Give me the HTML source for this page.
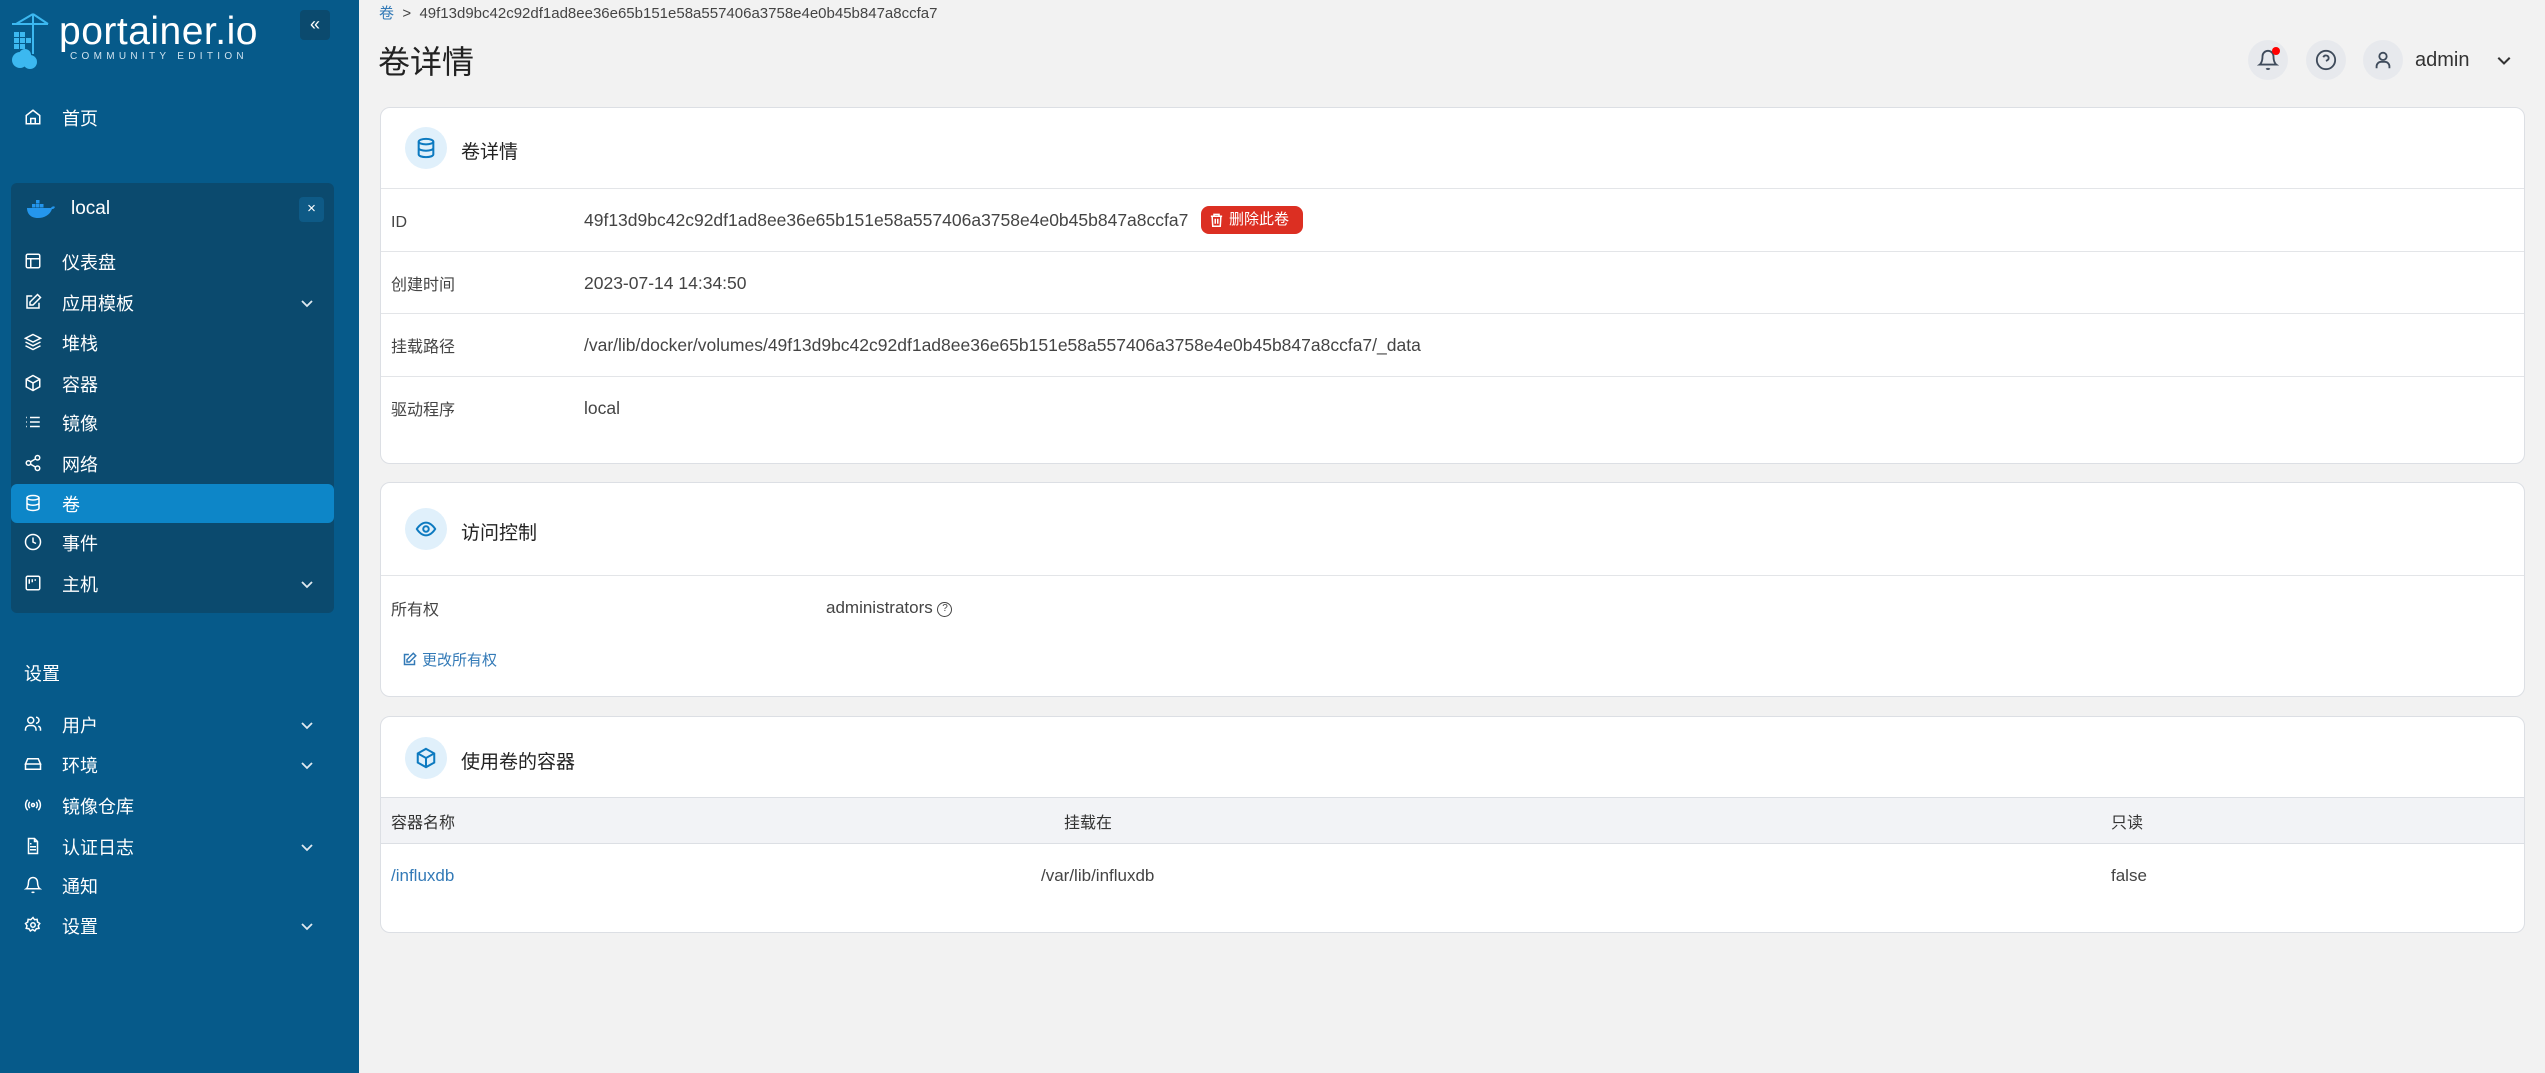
<!DOCTYPE html>
<html><head><meta charset="utf-8"><style>
*{box-sizing:border-box;margin:0;padding:0}
body{width:2545px;height:1073px;background:#f2f2f2;font-family:"Liberation Sans","Noto Sans CJK SC",sans-serif;position:relative;overflow:hidden;color:#333;line-height:20px}
.sb{position:absolute;left:0;top:0;width:359px;height:1073px;background:#065a8a;color:#fff}
.a{position:absolute}
.ni{position:absolute;left:24px;font-size:18px;color:#fff;display:flex;align-items:center;height:30px;line-height:30px}
.ni span{position:relative;top:2px}
.ni svg{width:18px;height:18px;margin-right:20px;stroke:#fff;fill:none;stroke-width:2}
.chev{position:absolute;left:300px;width:14px;height:14px}
.env{position:absolute;left:11px;top:183px;width:323px;height:430px;background:#0b4a6e;border-radius:6px}
.card{position:absolute;left:380px;width:2145px;background:#fff;border:1px solid #dcdfe4;border-radius:10px}
.ch{height:81px;border-bottom:1px solid #e3e5e8;display:flex;align-items:center;padding-left:24px;font-size:19px;color:#222;line-height:24px}
.ch b{font-weight:normal;position:relative;top:5px}
.ic{width:42px;height:42px;border-radius:50%;background:#e0f0fb;display:flex;align-items:center;justify-content:center;margin-right:14px}
.ic svg{width:22px;height:22px;stroke:#0d7ac0;fill:none;stroke-width:2.2}
.row{height:62.5px;border-bottom:1px solid #e3e5e8;position:relative;font-size:17.5px;color:#444}
.row span{position:absolute;top:21px;line-height:20px;height:20px}
.row span.l{font-size:16px;top:24px}
.tb{position:absolute;font-size:17px;color:#444;line-height:20px}
.circ{position:absolute;width:40px;height:40px;border-radius:50%;background:#e7e9ed;display:flex;align-items:center;justify-content:center}
.circ svg{width:22px;height:22px;stroke:#3f4b5b;fill:none;stroke-width:2}
</style></head><body>
<div class="sb">
 <svg class="a" style="left:8px;top:10px" width="42" height="60" viewBox="0 0 42 60"><g stroke="#3cb8f0" stroke-width="2" fill="none"><line x1="25" y1="4" x2="25" y2="44"/><line x1="4" y1="14" x2="40" y2="14"/><line x1="25" y1="4" x2="8" y2="14"/><line x1="25" y1="4" x2="40" y2="14"/></g><g fill="#3cb8f0"><rect x="6" y="22" width="5" height="5"/><rect x="12" y="22" width="5" height="5"/><rect x="6" y="28" width="5" height="5"/><rect x="12" y="28" width="5" height="5"/><rect x="18" y="28" width="5" height="5"/><rect x="6" y="34" width="5" height="5"/><rect x="12" y="34" width="5" height="5"/><circle cx="12" cy="50" r="8"/><circle cx="22" cy="52" r="7"/><circle cx="17" cy="45" r="6"/></g></svg>
 <div class="a" style="left:59px;top:10px;font-size:39px;line-height:44px;color:#fff;letter-spacing:0.5px">portainer.io</div>
 <div class="a" style="left:70px;top:51px;font-size:10px;line-height:12px;color:#cfe3ef;letter-spacing:4.3px">COMMUNITY EDITION</div>
 <div class="a" style="left:300px;top:10px;width:30px;height:30px;background:#0b4a6e;border-radius:4px;color:#fff;font-size:18px;text-align:center;line-height:28px">«</div>
 <div class="ni" style="top:102px"><svg viewBox="0 0 24 24"><path d="M3 10l9-7 9 7v11H3z"/><path d="M9 21v-7h6v7"/></svg><span>首页</span></div>
 <div class="env"></div>
 <svg class="a" style="left:27px;top:200px" width="28" height="18" viewBox="0 0 28 18"><g fill="#2496ed"><rect x="5" y="4" width="3.5" height="3.5"/><rect x="9" y="4" width="3.5" height="3.5"/><rect x="13" y="4" width="3.5" height="3.5"/><rect x="9" y="0" width="3.5" height="3.5"/><path d="M0 8h24c1-2 3-2 4-1-1 2-2 2-3 2-2 6-8 9-14 9C3 18 0 13 0 8z"/></g></svg>
 <div class="a" style="left:71px;top:198px;font-size:19px;line-height:22px">local</div>
 <div class="a" style="left:299px;top:197px;width:25px;height:25px;background:#0e5a86;border-radius:4px;text-align:center;line-height:24px;font-size:15px">×</div>
 <div class="a" style="left:11px;top:484px;width:323px;height:39px;background:#0d86c8;border-radius:6px"></div>
 <div class="ni" style="top:246px"><svg viewBox="0 0 24 24"><rect x="3" y="3" width="18" height="18" rx="2"/><path d="M3 9h18M9 9v12"/></svg><span>仪表盘</span></div>
 <div class="ni" style="top:287px"><svg viewBox="0 0 24 24"><path d="M11 4H4v16h16v-7"/><path d="M18 2l4 4-10 10H8v-4z"/></svg><span>应用模板</span></div>
 <div class="ni" style="top:327px"><svg viewBox="0 0 24 24"><path d="M12 2l10 5-10 5-10-5z"/><path d="M2 12l10 5 10-5M2 17l10 5 10-5"/></svg><span>堆栈</span></div>
 <div class="ni" style="top:368px"><svg viewBox="0 0 24 24"><path d="M12 2l9 5v10l-9 5-9-5V7z"/><path d="M3 7l9 5 9-5M12 12v10"/></svg><span>容器</span></div>
 <div class="ni" style="top:407px"><svg viewBox="0 0 24 24"><path d="M8 6h13M8 12h13M8 18h13M3 6h1M3 12h1M3 18h1"/></svg><span>镜像</span></div>
 <div class="ni" style="top:448px"><svg viewBox="0 0 24 24"><circle cx="18" cy="5" r="3"/><circle cx="6" cy="12" r="3"/><circle cx="18" cy="19" r="3"/><path d="M8.6 13.5l6.8 4M15.4 6.5l-6.8 4"/></svg><span>网络</span></div>
 <div class="ni" style="top:488px"><svg viewBox="0 0 24 24"><ellipse cx="12" cy="5" rx="8" ry="3"/><path d="M4 5v14c0 1.7 3.6 3 8 3s8-1.3 8-3V5M4 12c0 1.7 3.6 3 8 3s8-1.3 8-3"/></svg><span>卷</span></div>
 <div class="ni" style="top:527px"><svg viewBox="0 0 24 24"><circle cx="12" cy="12" r="10"/><path d="M12 6v6l4 2"/></svg><span>事件</span></div>
 <div class="ni" style="top:568px"><svg viewBox="0 0 24 24"><rect x="3" y="3" width="18" height="18" rx="2"/><path d="M7 7v6M11 7v4M15 7v2"/></svg><span>主机</span></div>
 <div class="a" style="left:24px;top:661px;font-size:18px;line-height:26px">设置</div>
 <div class="ni" style="top:709px"><svg viewBox="0 0 24 24"><circle cx="9" cy="7" r="4"/><path d="M2 21v-2a5 5 0 015-5h4a5 5 0 015 5v2M16 3a4 4 0 010 8M22 21v-2a4 4 0 00-3-4"/></svg><span>用户</span></div>
 <div class="ni" style="top:749px"><svg viewBox="0 0 24 24"><path d="M2 12h20v7H2zM5 5h14l3 7H2z"/><path d="M6 16h.01M10 16h.01"/></svg><span>环境</span></div>
 <div class="ni" style="top:790px"><svg viewBox="0 0 24 24"><circle cx="12" cy="12" r="2"/><path d="M16.2 7.8a6 6 0 010 8.4M7.8 16.2a6 6 0 010-8.4M19 5a10 10 0 010 14M5 19A10 10 0 015 5"/></svg><span>镜像仓库</span></div>
 <div class="ni" style="top:831px"><svg viewBox="0 0 24 24"><path d="M14 2H6v20h12V6z"/><path d="M14 2v4h4M8 13h8M8 17h8M8 9h2"/></svg><span>认证日志</span></div>
 <div class="ni" style="top:870px"><svg viewBox="0 0 24 24"><path d="M18 8A6 6 0 006 8c0 7-3 9-3 9h18s-3-2-3-9M13.7 21a2 2 0 01-3.4 0"/></svg><span>通知</span></div>
 <div class="ni" style="top:910px"><svg viewBox="0 0 24 24"><circle cx="12" cy="12" r="3"/><path d="M12 2l2 3 3.5-.5.5 3.5 3 2-2 3 1 3.5-3.5.5-2 3-3-2-3 2-2-3-3.5-.5 1-3.5-2-3 3-2 .5-3.5 3.5.5z"/></svg><span>设置</span></div>
 <svg class="chev" style="top:296px" viewBox="0 0 14 14"><path d="M2 5l5 5 5-5" stroke="#dfe9f0" stroke-width="1.8" fill="none"/></svg>
 <svg class="chev" style="top:577px" viewBox="0 0 14 14"><path d="M2 5l5 5 5-5" stroke="#dfe9f0" stroke-width="1.8" fill="none"/></svg>
 <svg class="chev" style="top:718px" viewBox="0 0 14 14"><path d="M2 5l5 5 5-5" stroke="#dfe9f0" stroke-width="1.8" fill="none"/></svg>
 <svg class="chev" style="top:758px" viewBox="0 0 14 14"><path d="M2 5l5 5 5-5" stroke="#dfe9f0" stroke-width="1.8" fill="none"/></svg>
 <svg class="chev" style="top:840px" viewBox="0 0 14 14"><path d="M2 5l5 5 5-5" stroke="#dfe9f0" stroke-width="1.8" fill="none"/></svg>
 <svg class="chev" style="top:919px" viewBox="0 0 14 14"><path d="M2 5l5 5 5-5" stroke="#dfe9f0" stroke-width="1.8" fill="none"/></svg>
</div>

<div class="a" style="left:379px;top:4px;font-size:15px;color:#444"><span style="color:#337ab7">卷</span> &nbsp;&gt;&nbsp; 49f13d9bc42c92df1ad8ee36e65b151e58a557406a3758e4e0b45b847a8ccfa7</div>
<div class="a" style="left:378px;top:43px;font-size:32px;line-height:38px;color:#222">卷详情</div>

<div class="circ" style="left:2248px;top:40px"><svg viewBox="0 0 24 24"><path d="M18 8A6 6 0 006 8c0 7-3 9-3 9h18s-3-2-3-9M13.7 21a2 2 0 01-3.4 0"/></svg><div class="a" style="left:24px;top:7px;width:8px;height:8px;border-radius:50%;background:#f00"></div></div>
<div class="circ" style="left:2306px;top:40px"><svg viewBox="0 0 24 24"><circle cx="12" cy="12" r="10"/><path d="M9.1 9a3 3 0 015.8 1c0 2-3 3-3 3M12 17h.01"/></svg></div>
<div class="circ" style="left:2363px;top:40px"><svg viewBox="0 0 24 24"><circle cx="12" cy="8" r="4"/><path d="M5 21v-2a5 5 0 015-5h4a5 5 0 015 5v2"/></svg></div>
<div class="a" style="left:2415px;top:49px;font-size:20px;line-height:22px;color:#333">admin</div>
<svg class="a" style="left:2496px;top:52px" width="16" height="16" viewBox="0 0 14 14"><path d="M2 5l5 5 5-5" stroke="#333" stroke-width="1.8" fill="none"/></svg>

<div class="card" style="top:107px;height:357px">
 <div class="ch"><div class="ic"><svg viewBox="0 0 24 24"><ellipse cx="12" cy="5" rx="8" ry="3"/><path d="M4 5v14c0 1.7 3.6 3 8 3s8-1.3 8-3V5M4 12c0 1.7 3.6 3 8 3s8-1.3 8-3"/></svg></div><b>卷详情</b></div>
 <div class="row"><span class="l" style="left:10px">ID</span><span style="left:203px">49f13d9bc42c92df1ad8ee36e65b151e58a557406a3758e4e0b45b847a8ccfa7</span>
  <div class="a" style="left:820px;top:17px;width:102px;height:28px;background:#dc2f22;border-radius:8px;color:#fff;font-size:15px;line-height:28px;padding-left:28px">删除此卷<svg class="a" style="left:8px;top:6px" width="15" height="16" viewBox="0 0 24 24" fill="none" stroke="#fff" stroke-width="2.4"><path d="M3 6h18M8 6V3h8v3M5 6l1 16h12l1-16M10 10v8M14 10v8"/></svg></div></div>
 <div class="row"><span class="l" style="left:10px">创建时间</span><span style="left:203px">2023-07-14 14:34:50</span></div>
 <div class="row"><span class="l" style="left:10px">挂载路径</span><span style="left:203px">/var/lib/docker/volumes/49f13d9bc42c92df1ad8ee36e65b151e58a557406a3758e4e0b45b847a8ccfa7/_data</span></div>
 <div class="row" style="border:0"><span class="l" style="left:10px">驱动程序</span><span style="left:203px">local</span></div>
</div>

<div class="card" style="top:482px;height:215px">
 <div class="ch" style="height:93px"><div class="ic"><svg viewBox="0 0 24 24"><path d="M2 12s4-7 10-7 10 7 10 7-4 7-10 7S2 12 2 12z"/><circle cx="12" cy="12" r="3"/></svg></div><b>访问控制</b></div>
 <div class="tb" style="left:10px;top:118px;font-size:16px">所有权</div>
 <div class="tb" style="left:445px;top:115px">administrators <span style="display:inline-block;width:15px;height:15px;border:1.6px solid #444;border-radius:50%;font-size:10px;text-align:center;line-height:12px;vertical-align:2px">?</span></div>
 <div class="tb" style="left:21px;top:168px;color:#337ab7;font-size:15px"><svg width="15" height="15" viewBox="0 0 24 24" fill="none" stroke="#337ab7" stroke-width="2.4" style="vertical-align:-2px;margin-right:5px"><path d="M11 4H4v16h16v-7"/><path d="M18 2l4 4-10 10H8v-4z"/></svg>更改所有权</div>
</div>

<div class="card" style="top:716px;height:217px">
 <div class="ch" style="height:81px;border:0"><div class="ic"><svg viewBox="0 0 24 24"><path d="M12 2l9 5v10l-9 5-9-5V7z"/><path d="M3 7l9 5 9-5M12 12v10"/></svg></div><b>使用卷的容器</b></div>
 <div class="a" style="left:0;top:80px;width:100%;height:47px;background:#f2f3f6;border-top:1px solid #dcdfe4;border-bottom:1px solid #dcdfe4"></div>
 <div class="tb" style="left:10px;top:97px;color:#333;font-size:16px">容器名称</div>
 <div class="tb" style="left:683px;top:97px;color:#333;font-size:16px">挂载在</div>
 <div class="tb" style="left:1730px;top:97px;color:#333;font-size:16px">只读</div>
 <div class="tb" style="left:10px;top:149px;color:#337ab7">/influxdb</div>
 <div class="tb" style="left:660px;top:149px">/var/lib/influxdb</div>
 <div class="tb" style="left:1730px;top:149px">false</div>
</div>
</body></html>
